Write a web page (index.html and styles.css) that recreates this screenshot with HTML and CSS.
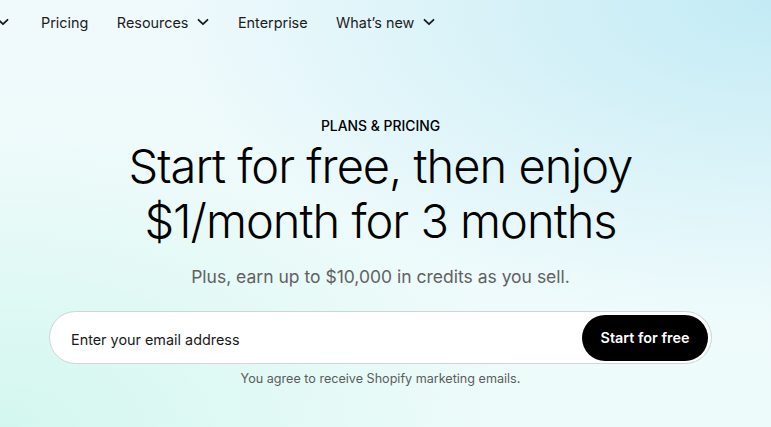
FILE: index.html
```html
<!DOCTYPE html>
<html lang="en">
<head>
<meta charset="utf-8">
<link rel="stylesheet" href="styles.css">
</head>
<body>
<div class="page">
  <nav class="nav">
    <span class="nav-item chev-only"><svg class="chev" viewBox="0 0 12 8"><path d="M1.5 1.8 6 6.2l4.5-4.4"/></svg></span>
    <span class="nav-item">Pricing</span>
    <span class="nav-item">Resources <svg class="chev" viewBox="0 0 12 8"><path d="M1.5 1.8 6 6.2l4.5-4.4"/></svg></span>
    <span class="nav-item">Enterprise</span>
    <span class="nav-item">What’s new <svg class="chev" viewBox="0 0 12 8"><path d="M1.5 1.8 6 6.2l4.5-4.4"/></svg></span>
  </nav>
  <main class="hero">
    <p class="eyebrow">PLANS &amp; PRICING</p>
    <h1 class="title">Start for free, then enjoy<br>$1/month for 3 months</h1>
    <p class="sub">Plus, earn up to $10,000 in credits as you sell.</p>
    <form class="signup">
      <span class="email">Enter your email address</span>
      <span class="btn">Start for free</span>
    </form>
    <p class="legal">You agree to receive Shopify marketing emails.</p>
  </main>
</div>
</body>
</html>
```

FILE: styles.css
```css
html, body {
  margin: 0;
  padding: 0;
}
body {
  font-family: Inter, "Noto Sans", sans-serif;
  color: #000;
  width: 771px;
  height: 427px;
  overflow: hidden;
  background:
    radial-gradient(ellipse 520px 300px at 0% 100%, #d3f7ee 0%, rgba(211,247,238,0) 100%),
    radial-gradient(ellipse 620px 320px at 100% 0%, #c3ebf5 0%, rgba(195,235,245,0) 100%),
    linear-gradient(180deg, #f0fafc 0%, #eefbfb 100%);
}
.page {
  width: 761px;
  height: 427px;
}
.nav {
  display: flex;
  align-items: center;
  height: 44px;
  font-size: 14.4px;
  color: #1c1c1c;
}
.nav-item {
  display: flex;
  align-items: center;
  gap: 9px;
  margin-right: 28.5px;
  white-space: nowrap;
}
.chev-only {
  margin-left: -3px;
  margin-right: 32px;
}
.chev {
  width: 12px;
  height: 8px;
  fill: none;
  stroke: #1c1c1c;
  stroke-width: 1.8;
  stroke-linecap: round;
  stroke-linejoin: round;
}
.hero {
  display: flex;
  flex-direction: column;
  align-items: center;
  text-align: center;
}
.eyebrow {
  margin: 74px 0 0;
  font-size: 13.9px;
  font-weight: 500;
  line-height: 16px;
}
.title {
  margin: 4px 0 0;
  font-size: 47px;
  font-weight: 300;
  line-height: 55px;
  letter-spacing: -1px;
}
.sub {
  margin: 17px 0 0;
  font-size: 17.5px;
  color: #616161;
  line-height: 24px;
}
.signup {
  margin: 22px 0 0;
  width: 663px;
  height: 53px;
  box-sizing: border-box;
  border: 1px solid #cfd4d6;
  border-radius: 27px;
  background: #fff;
  display: flex;
  align-items: center;
  justify-content: space-between;
  padding: 0 3px 0 21px;
}
.email {
  font-size: 14.4px;
  color: #1a1a1a;
  padding-top: 3px;
}
.btn {
  background: #000;
  color: #fff;
  font-weight: 600;
  font-size: 14.4px;
  height: 46px;
  width: 126px;
  border-radius: 23px;
  display: flex;
  align-items: center;
  justify-content: center;
}
.legal {
  margin: 7px 0 0;
  font-size: 12.6px;
  color: #5c5c5c;
  line-height: 16px;
}
```
